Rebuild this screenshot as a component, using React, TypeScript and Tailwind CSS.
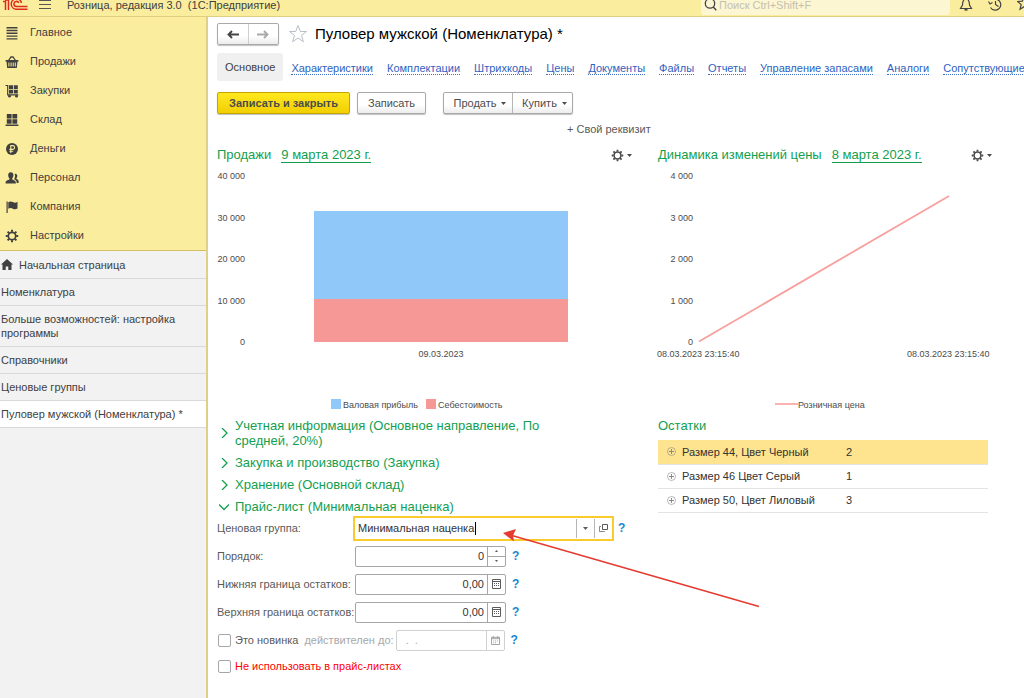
import React from 'react';

const menu = ['Главное', 'Продажи', 'Закупки', 'Склад', 'Деньги', 'Персонал', 'Компания', 'Настройки'];

const openWindows = [
  'Номенклатура',
  'Больше возможностей: настройка программы',
  'Справочники',
  'Ценовые группы',
  'Пуловер мужской (Номенклатура) *',
];

const tabs = [
  'Характеристики',
  'Комплектации',
  'Штрихкоды',
  'Цены',
  'Документы',
  'Файлы',
  'Отчеты',
  'Управление запасами',
  'Аналоги',
  'Сопутствующие',
];

const stock = [
  { name: 'Размер 44, Цвет Черный', count: 2 },
  { name: 'Размер 46 Цвет Серый', count: 1 },
  { name: 'Размер 50, Цвет Лиловый', count: 3 },
];

const buttonStyle =
  'h-[22px] rounded-[2px] border border-[#a9a9a9] bg-linear-to-b from-white from-60% to-[#ececec] shadow-[0_1px_1px_rgba(0,0,0,0.25)]';

const GearIcon: React.FC<{ className?: string }> = ({ className }) => (
  <svg viewBox="0 0 14 14" className={className} fill="none" stroke="currentColor" aria-hidden="true">
    <circle cx="7" cy="7" r="3.7" strokeWidth="1.7" />
    <path
      d="M7 .8v2M7 11.2v2M.8 7h2M11.2 7h2M2.6 2.6l1.5 1.5M9.9 9.9l1.5 1.5M2.6 11.4l1.5-1.5M9.9 4.1l1.5-1.5"
      strokeWidth="2"
    />
  </svg>
);

const MenuIcon: React.FC<{ name: string }> = ({ name }) => {
  if (name === 'Настройки') return <GearIcon className="size-[14px]" />;
  return (
    <svg viewBox="0 0 14 14" className="size-[14px]" fill="currentColor" aria-hidden="true">
      {name === 'Главное' && (
        <path d="M1.5 1h11v1.4h-11zM1.5 3.8h11v1.4h-11zM1.5 6.6h11V8h-11zM1.5 9.4h11v1.4h-11zM1.5 12.2h11v1.3h-11z" />
      )}
      {name === 'Продажи' && (
        <>
          <path d="M3.2 6L6 2h2l2.8 4" fill="none" stroke="currentColor" strokeWidth="1.3" />
          <path
            fillRule="evenodd"
            d="M.6 5h12.8v1.6h-.9L11.8 13H2.2l-.7-6.4H.6zM3.4 7.6v4h1v-4zM5.6 7.6v4h1v-4zM7.7 7.6v4h1v-4zM9.8 7.6v4h1v-4z"
          />
        </>
      )}
      {name === 'Закупки' && (
        <>
          <path d="M.5 1.5h2.2v9.3h10.6" fill="none" stroke="currentColor" strokeWidth="1.2" />
          <path d="M4 1.2h4v3.7H4zM8.8 1.2h4v3.7h-4zM4 5.7h4v3.8H4zM8.8 5.7h4v3.8h-4z" />
          <circle cx="4.5" cy="12.2" r="1.4" />
          <circle cx="11.5" cy="12.2" r="1.4" />
        </>
      )}
      {name === 'Склад' && (
        <path d="M1.8 1h4.8v4.5H1.8zM7.4 1h4.8v4.5H7.4zM1.8 6.3h4.8v4.5H1.8zM7.4 6.3h4.8v4.5H7.4zM.6 11.6h12.8V13H.6z" />
      )}
      {name === 'Деньги' && (
        <>
          <circle cx="7" cy="7" r="6" />
          <path
            d="M5.8 11V3.6h1.9a1.9 1.9 0 0 1 0 3.8H4.4M4.4 9.2h3.8"
            fill="none"
            stroke="#fbed9e"
            strokeWidth="1.1"
          />
        </>
      )}
      {name === 'Персонал' && (
        <>
          <path d="M5.8 1.3c1.7 0 2.7 1.2 2.6 3 0 1.4-.5 2.4-1.2 3v1.1c1.6.7 3.6 1 3.6 2.8v1.3H.6v-1.3c0-1.8 2.2-2.1 3.8-2.8V7.3c-.7-.6-1.2-1.6-1.2-3 0-1.8.9-3 2.6-3z" />
          <path d="M10.3 2.8c1.4 0 2 1 2 2.2 0 1-.4 1.8-.9 2.3v.8c1 .5 2.2.8 2.2 2.2v1.8h-2V11c0-1.5-1.3-2.2-2.5-2.7.6-.9 1-1.9 1-3.2 0-.9-.2-1.6-.5-2.2z" />
        </>
      )}
      {name === 'Компания' && (
        <>
          <path d="M1.5 1.5h1.2V13H1.5z" />
          <path d="M3.3 2.2c1.5-.9 3-.9 4.6-.1 1.6.8 3 .7 4.6-.3v6.6c-1.6 1-3 1.1-4.6.3-1.6-.8-3.1-.8-4.6.1z" />
        </>
      )}
    </svg>
  );
};

const Caret: React.FC = () => (
  <svg viewBox="0 0 5 3" className="h-[3px] w-[5px]" fill="currentColor" aria-hidden="true">
    <path d="M0 0h5L2.5 3z" />
  </svg>
);

const Help: React.FC = () => (
  <button type="button" aria-label="Справка" className="ml-[6px] text-[12px] font-bold text-[#1a86d0]">
    ?
  </button>
);

const CalcIcon: React.FC = () => (
  <svg viewBox="0 0 10 10" className="size-[10px]" fill="none" stroke="currentColor" aria-hidden="true">
    <path d="M.5 .5h8v9h-8zM.5 2.5h8" />
    <path d="M2 4.5h1M4 4.5h1M6 4.5h1M2 6.5h1M4 6.5h1M6 6.5h1" />
  </svg>
);

const Chevron: React.FC<{ open?: boolean }> = ({ open }) => (
  <svg viewBox="0 0 10 10" className="size-[10px] shrink-0" fill="none" stroke="currentColor" strokeWidth="1.3" aria-hidden="true">
    <path d={open ? 'M0 2.5l5 5 5-5' : 'M3 0l5 5-5 5'} />
  </svg>
);

const Section: React.FC<{ title: string; open?: boolean }> = ({ title, open }) => (
  <button type="button" aria-expanded={!!open} className="flex w-full items-center gap-[6px] text-left">
    <Chevron open={open} />
    <span>{title}</span>
  </button>
);

const ChartHeader: React.FC<{ title: string; date: string }> = ({ title, date }) => (
  <div className="flex h-[18px] items-center text-[13px] text-[#12a050]">
    <h2>{title}</h2>
    <a href="#" className="ml-[10px] border-b border-[#12a050] leading-[14px]">{date}</a>
    <button type="button" aria-label="Настройки диаграммы" className="ml-auto flex items-center gap-[3px] text-[#4c4c4c]">
      <GearIcon className="size-[13px]" />
      <Caret />
    </button>
  </div>
);

const SalesChart: React.FC = () => (
  <svg viewBox="0 0 415 248" className="block w-full" fill="#4c4c4c" role="img" aria-label="Продажи">
    {['40 000', '30 000', '20 000', '10 000', '0'].map((tick, i) => (
      <text key={tick} x="28" y={15 + i * 41.5} textAnchor="end" fontSize="9">{tick}</text>
    ))}
    <rect x="97" y="47" width="254" height="88" fill="#8fc8f9" />
    <rect x="97" y="135" width="254" height="43" fill="#f69896" />
    <text x="224" y="193" textAnchor="middle" fontSize="9">09.03.2023</text>
    <rect x="114" y="235" width="10" height="10" fill="#8fc8f9" />
    <text x="126" y="244" fontSize="9">Валовая прибыль</text>
    <rect x="209" y="235" width="10" height="10" fill="#f69896" />
    <text x="221" y="244" fontSize="9">Себестоимость</text>
  </svg>
);

const PriceChart: React.FC = () => (
  <svg viewBox="0 0 334 248" className="block w-full overflow-visible" fill="#4c4c4c" role="img" aria-label="Динамика изменений цены">
    {['4 000', '3 000', '2 000', '1 000', '0'].map((tick, i) => (
      <text key={tick} x="35" y={15 + i * 41.5} textAnchor="end" fontSize="9">{tick}</text>
    ))}
    <path d="M41 177.5L291 32" stroke="#f8a09e" strokeWidth="1.8" />
    <text x="-1" y="193" fontSize="9">08.03.2023 23:15:40</text>
    <text x="249" y="193" fontSize="9">08.03.2023 23:15:40</text>
    <path d="M117 240h23" stroke="#f69896" strokeWidth="1.5" />
    <text x="140" y="244" fontSize="9">Розничная цена</text>
  </svg>
);

const NumberField: React.FC<{ id: string; label: string; value: string; spin?: boolean }> = ({ id, label, value, spin }) => (
  <div className="flex h-[28px] items-center">
    <label htmlFor={id} className="w-[138px] whitespace-nowrap">{label}</label>
    <div className="flex h-[21px] w-[151px] rounded-[2px] border border-[#a6a6a6]">
      <input id={id} type="text" defaultValue={value} className="w-full min-w-0 pr-[3px] text-right text-[#333] outline-none" />
      {spin ? (
        <div className="flex w-[18px] shrink-0 flex-col border-l border-[#a6a6a6]">
          <button type="button" aria-label="Больше" className="flex flex-1 items-center justify-center border-b border-[#a6a6a6]">
            <svg viewBox="0 0 3 2" className="h-[2px] w-[3px]" fill="currentColor"><path d="M0 2h3L1.5 0z" /></svg>
          </button>
          <button type="button" aria-label="Меньше" className="flex flex-1 items-center justify-center">
            <svg viewBox="0 0 3 2" className="h-[2px] w-[3px]" fill="currentColor"><path d="M0 0h3L1.5 2z" /></svg>
          </button>
        </div>
      ) : (
        <button type="button" aria-label="Калькулятор" className="flex w-[18px] shrink-0 items-center justify-center border-l border-[#a6a6a6]">
          <CalcIcon />
        </button>
      )}
    </div>
    <Help />
  </div>
);

const Header: React.FC = () => (
  <header className="flex h-[17px] items-start overflow-hidden border-b border-[#e0cf7c] bg-[#fbed9e]">
    <svg viewBox="0 0 26 11" className="ml-[3px] h-[11px] w-[26px] shrink-0" fill="none" stroke="#e02a20" strokeWidth="1.5" aria-label="1С">
      <path d="M0 1.5h2.5V10M2 0h3.5v10" />
      <path d="M18.500 3a5.200 5.200 0 1 0-5.200 6.200h11.200M15.800 3a2.500 2.500 0 1 0-2.500 3.400h11.200" />
    </svg>
    <button type="button" aria-label="Меню" className="ml-[9px] h-[11px] w-[14px]">
      <svg viewBox="0 0 14 11" className="h-[11px] w-[14px]" stroke="#555" fill="none">
        <path d="M1 .5h12M1 4.5h12M1 8.5h12" />
      </svg>
    </button>
    <span className="ml-[15px] leading-[10px] whitespace-pre">Розница, редакция 3.0  (1С:Предприятие)</span>
    <label className="ml-auto flex h-[15px] w-[249px] items-start gap-[2px] rounded-b-[3px] bg-[#fdf6d3] pl-[3px]">
      <svg viewBox="0 0 13 11" className="h-[11px] w-[13px] shrink-0" stroke="#444" fill="none" strokeWidth="1.3">
        <circle cx="6" cy="3.5" r="4.7" />
        <path d="M9.3 7l3 3.3" />
      </svg>
      <input type="search" placeholder="Поиск Ctrl+Shift+F" aria-label="Поиск" className="h-[10px] w-full min-w-0 bg-transparent leading-[10px] outline-none placeholder:text-[#c4c0b0]" />
    </label>
    <div className="ml-[9px] flex w-[65px] shrink-0 gap-[15px] overflow-hidden">
      <svg viewBox="0 0 14 12" className="h-[12px] w-[14px] shrink-0" stroke="#444" fill="none" strokeWidth="1.2">
        <path d="M5 0C3.5 1 3.5 3 3.5 5L1.5 8.5h11L10.5 5c0-2 0-4-1.5-5" />
        <path d="M5.5 9.8h3" strokeWidth="1.6" />
      </svg>
      <svg viewBox="0 0 14 12" className="h-[12px] w-[14px] shrink-0" stroke="#444" fill="none" strokeWidth="1.2">
        <path d="M9 -.5a5.5 5.5 0 1 1-6.5 8M.5 1.5L2 4l2.5-1.5M7.5 1v3.5l3 2" />
      </svg>
      <svg viewBox="0 0 14 12" className="h-[12px] w-[14px] shrink-0" stroke="#444" fill="none" strokeWidth="1.2">
        <path d="M7-3l1.7 4.2 4.8.3-3.7 3.1 1.2 4.7L7 6.8l-4 2.5 1.2-4.7L.5 1.5l4.8-.3z" />
      </svg>
    </div>
  </header>
);

const Sidebar: React.FC = () => (
  <aside className="w-[208px] shrink-0 border-r-2 border-[#ddd089] bg-[#f2f2f2]">
    <nav className="border-b border-[#d3c062] bg-[#fbed9e] pt-px">
      {menu.map((item) => (
        <a key={item} href="#" className="flex h-[29px] items-center gap-[11px] pl-[5px]">
          <MenuIcon name={item} />
          {item}
        </a>
      ))}
    </nav>
    <nav className="leading-[14px]">
      <a href="#" className="flex h-[28px] items-center gap-[6px] border-b border-[#d9d9d9] pl-px">
        <svg viewBox="0 0 12 11" className="h-[11px] w-[12px]" fill="currentColor" aria-hidden="true">
          <path d="M6 0l6 5.5h-1.5V11H7.3V7.5H4.7V11H1.5V5.5H0z" />
        </svg>
        Начальная страница
      </a>
      {openWindows.map((item, i) => (
        <a
          key={item}
          href="#"
          className={`block border-b border-[#d9d9d9] py-[6px] pr-[20px] pl-px ${i === openWindows.length - 1 ? 'bg-white' : ''}`}
        >
          {item}
        </a>
      ))}
    </nav>
  </aside>
);

const PriceListForm: React.FC = () => (
  <form className="text-[#5a5a5a]">
    <div className="flex h-[28px] items-center">
      <label htmlFor="group" className="w-[138px]">Ценовая группа:</label>
      <div className="relative flex h-[21px] w-[257px] items-center bg-white ring-2 ring-[#f9cb2c]">
        <input id="group" type="text" defaultValue="Минимальная наценка" className="h-full w-full min-w-0 pl-[3px] text-[#333] outline-none" />
        <span className="absolute top-1 left-[120px] h-[13px] w-px bg-black" />
        <button type="button" aria-label="Выбрать" className="flex h-[19px] w-[18px] shrink-0 items-center justify-center border-l border-[#b5b5b5]">
          <Caret />
        </button>
        <button type="button" aria-label="Открыть" className="flex h-[19px] w-[18px] shrink-0 items-center justify-center border-l border-[#b5b5b5]">
          <svg viewBox="0 0 9 9" className="size-[9px]" fill="none" stroke="currentColor">
            <path d="M3.5 .5h5v5h-5z" />
            <path d="M2 2.5H.5v5h5V7" opacity="0.7" />
          </svg>
        </button>
        <svg viewBox="0 0 260 84" className="pointer-events-none absolute top-[9px] left-[147px] z-10 h-[84px] w-[260px] max-w-none" aria-hidden="true">
          <path d="M10 8.5L257 79.5" stroke="#e53b31" strokeWidth="1.6" />
          <path d="M1 6l13-4-3 6.5 1 6z" fill="#e53b31" />
        </svg>
      </div>
      <Help />
    </div>
    <NumberField id="order" label="Порядок:" value="0" spin />
    <NumberField id="min" label="Нижняя граница остатков:" value="0,00" />
    <NumberField id="max" label="Верхняя граница остатков:" value="0,00" />
    <div className="flex h-[28px] items-center">
      <input id="novelty" type="checkbox" className="ml-px size-[13px] appearance-none rounded-[2px] border border-[#a6a6a6] bg-white" />
      <label htmlFor="novelty" className="ml-1">Это новинка</label>
      <label htmlFor="until" className="ml-[6px] text-[#a8a8a8]">действителен до:</label>
      <div className="ml-[2px] flex h-[21px] w-[109px] rounded-[2px] border border-[#d0d0d0] text-[#a8a8a8]">
        <input id="until" type="text" disabled defaultValue="  .  ." className="w-full min-w-0 pl-[3px]" />
        <button type="button" aria-label="Календарь" className="flex w-[18px] shrink-0 items-center justify-center border-l border-[#d0d0d0]">
          <svg viewBox="0 0 10 10" className="size-[9px]" fill="none" stroke="#999">
            <path d="M.5 1.5h9v8h-9zM.5 3h9M2.5 0v2M7.5 0v2M2.5 5.5h1M4.5 5.5h1M6.5 5.5h1M2.5 7.5h1M4.5 7.5h1" />
          </svg>
        </button>
      </div>
      <Help />
    </div>
    <div className="flex h-[24px] items-center">
      <input id="exclude" type="checkbox" className="ml-px size-[13px] appearance-none rounded-[2px] border border-[#a6a6a6] bg-white" />
      <label htmlFor="exclude" className="ml-1 text-[#ff0000]">Не использовать в прайс-листах</label>
    </div>
  </form>
);

export default function App() {
  return (
    <div className="flex min-h-screen flex-col bg-white font-['Liberation_Sans',Arial,sans-serif] text-[11px] text-[#404040]">
      <Header />
      <div className="flex flex-1">
        <Sidebar />
        <main className="min-w-0 flex-1 overflow-hidden pl-[9px]">
          <div className="mt-[6px] flex h-[22px] items-center">
            <div className={`flex w-[62px] ${buttonStyle}`}>
              <button type="button" aria-label="Назад" className="flex flex-1 items-center justify-center border-r border-[#cfcfcf]">
                <svg viewBox="0 0 12 9" className="h-[9px] w-[12px]" stroke="#444" fill="none" strokeWidth="1.9">
                  <path d="M12 4.5H1.5M5 1L1.5 4.5 5 8" />
                </svg>
              </button>
              <button type="button" aria-label="Вперед" className="flex flex-1 items-center justify-center">
                <svg viewBox="0 0 12 9" className="h-[9px] w-[12px]" stroke="#aaa" fill="none" strokeWidth="1.9">
                  <path d="M0 4.5h10.5M7 1l3.5 3.5L7 8" />
                </svg>
              </button>
            </div>
            <button type="button" aria-label="В избранное" className="ml-[9px]">
              <svg viewBox="0 0 20 20" className="size-[20px]" fill="none" stroke="#b9bec5">
                <path d="M10 1.5l2.3 6h6.2l-5 3.9 1.900 6.300L10 14l-5.400 3.700 1.900-6.300-5-3.900h6.200z" />
              </svg>
            </button>
            <h1 className="ml-[7px] text-[15px] text-black">Пуловер мужской (Номенклатура) *</h1>
          </div>

          <nav className="mt-2 flex h-[28px] items-center gap-[14px] whitespace-nowrap">
            <span className="mr-[-6px] flex h-full items-center rounded-[3px] bg-[#f0f0f0] px-2">Основное</span>
            {tabs.map((tab) => (
              <a key={tab} href="#" className="border-b border-dotted border-[#3d6cc4] pt-[2px] leading-[12px] text-[#2f62c0]">{tab}</a>
            ))}
          </nav>

          <div className="mt-[11px] flex h-[22px] text-[#4c4c4c]">
            <button type="button" className="w-[133px] rounded-[2px] border border-[#c2a500] bg-linear-to-b from-[#ffe81f] to-[#f2cf00] font-bold shadow-[0_1px_1px_rgba(0,0,0,0.25)]">
              Записать и закрыть
            </button>
            <button type="button" className={`ml-[7px] w-[69px] ${buttonStyle}`}>Записать</button>
            <div className={`ml-[17px] flex w-[130px] ${buttonStyle}`}>
              <button type="button" className="flex w-[69px] items-center justify-center gap-[5px] border-r border-[#b5b5b5] pl-1">Продать <Caret /></button>
              <button type="button" className="flex flex-1 items-center justify-center gap-[5px] pl-1">Купить <Caret /></button>
            </div>
          </div>

          <div className="grid grid-cols-[415fr_334fr] gap-x-[26px] pr-[32px]">
            <div className="col-span-2 h-[32px]">
              <button type="button" className="ml-[350px] h-[30px] text-[#5a5a5a]">+ Свой реквизит</button>
            </div>
            <section>
              <ChartHeader title="Продажи" date="9 марта 2023 г." />
              <SalesChart />
            </section>
            <section>
              <ChartHeader title="Динамика изменений цены" date="8 марта 2023 г." />
              <PriceChart />
            </section>
            <div className="mt-[6px]">
              <div className="flex w-[345px] flex-col gap-[7px] pl-[2px] text-[13px] leading-[15px] text-[#12a050]">
                <Section title="Учетная информация (Основное направление, По средней, 20%)" />
                <Section title="Закупка и производство (Закупка)" />
                <Section title="Хранение (Основной склад)" />
                <Section title="Прайс-лист (Минимальная наценка)" open />
              </div>
              <PriceListForm />
            </div>
            <section className="mt-[6px] mr-1">
              <h2 className="text-[13px] leading-[15px] text-[#12a050]">Остатки</h2>
              <table className="mt-[7px] w-full border-collapse text-[#333]">
                <tbody>
                  {stock.map((row, i) => (
                    <tr key={row.name} className={`h-[24px] border-b border-[#e3e3e3] ${i === 0 ? 'bg-[#fee48f]' : ''}`}>
                      <td className="w-[24px] pl-[9px]">
                        <svg viewBox="0 0 9 9" className="size-[9px]" fill="none" stroke="#8a8a8a">
                          <circle cx="4.5" cy="4.5" r="4" strokeWidth="0.6" />
                          <path d="M2 4.5h5M4.5 2v5" />
                        </svg>
                      </td>
                      <td className="w-[164px]">{row.name}</td>
                      <td>{row.count}</td>
                    </tr>
                  ))}
                </tbody>
              </table>
            </section>
          </div>
        </main>
      </div>
    </div>
  );
}
